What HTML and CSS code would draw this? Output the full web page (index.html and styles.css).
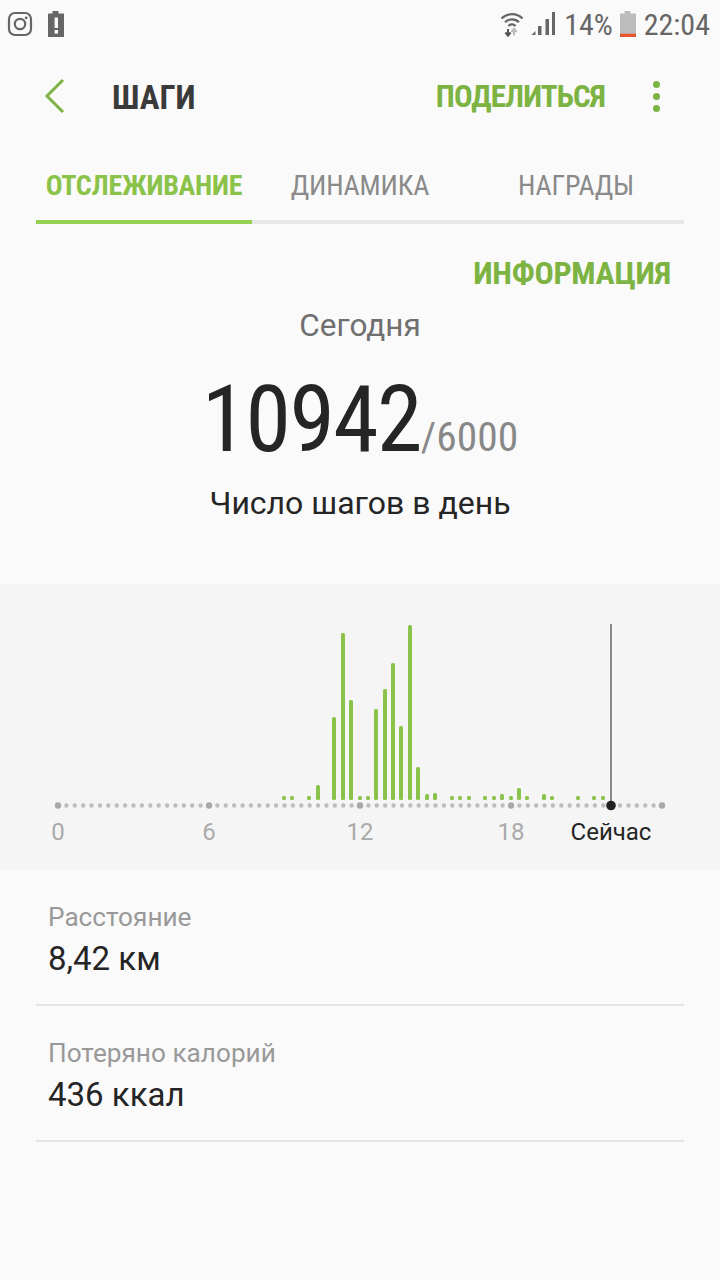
FILE: index.html
```html
<!DOCTYPE html>
<html lang="ru">
<head>
    <meta charset="UTF-8">
    <meta name="viewport" content="width=device-width, initial-scale=1.0">
    <title>Шаги</title>
    <link rel="stylesheet" href="styles.css">
</head>
<body>

<div class="statusbar">
    <div class="status-left">
        <svg class="ic-insta" width="26" height="26" viewBox="0 0 26 26">
            <rect x="2" y="2" width="22" height="22" rx="6" fill="none" stroke="#666" stroke-width="2.2"/>
            <circle cx="13" cy="13" r="5.2" fill="none" stroke="#666" stroke-width="2.2"/>
            <circle cx="19.2" cy="6.8" r="1.4" fill="#666"/>
        </svg>
        <svg class="ic-alert" width="18" height="26" viewBox="0 0 18 26">
            <path d="M5.5 0h6v2.5h5.5v23.5h-16v-23.5h4.5z" fill="#666"/>
            <rect x="7.6" y="6.5" width="3.4" height="10.5" fill="#fafafa"/>
            <rect x="7.6" y="19" width="3.4" height="3.6" fill="#fafafa"/>
        </svg>
    </div>
    <div class="status-right">
        <svg class="ic-wifi" width="24" height="26" viewBox="0 0 24 26">
            <path d="M1.5 7.5a15 15 0 0 1 21 0M5 11.3a10 10 0 0 1 14 0M8.4 15a5 5 0 0 1 7.2 0" fill="none" stroke="#666" stroke-width="2.2"/>
            <path d="M8 24.5v-6.5M5.4 21.5l2.6 3.2 2.6-3.2" fill="none" stroke="#555" stroke-width="2"/>
            <path d="M14 24.5v-6.5M11.4 21l2.6-3.2 2.6 3.2" fill="none" stroke="#bbb" stroke-width="2"/>
        </svg>
        <svg class="ic-signal" width="26" height="26" viewBox="0 0 26 26">
            <path d="M1.5 24l4-4v4zM8 24v-9h3.5v9zM15.5 24v-16h3.5v16zM22 24v-23h3v23z" fill="#666"/>
        </svg>
        <span class="status-text pct">14%</span>
        <svg class="ic-batt" width="18" height="26" viewBox="0 0 18 26">
            <path d="M5.5 0h6v2.5h5.5v23.5h-16v-23.5h4.5z" fill="#bdbdbd"/>
            <rect x="1" y="22.7" width="16" height="3.3" fill="#e8562e"/>
        </svg>
        <span class="status-text time">22:04</span>
    </div>
</div>

<header class="appbar">
    <svg class="back" width="22" height="36" viewBox="0 0 22 36">
        <path d="M19 2L3 18l16 16" fill="none" stroke="#7cb342" stroke-width="3"/>
    </svg>
    <span class="title"><span class="narrow">ШАГИ</span></span>
    <span class="share"><span class="narrow">ПОДЕЛИТЬСЯ</span></span>
    <div class="more"><i></i><i></i><i></i></div>
</header>

<nav class="tabs">
    <div class="tab active"><span class="narrow">ОТСЛЕЖИВАНИЕ</span></div>
    <div class="tab"><span class="narrow">ДИНАМИКА</span></div>
    <div class="tab"><span class="narrow">НАГРАДЫ</span></div>
</nav>

<div class="info"><span class="narrow">ИНФОРМАЦИЯ</span></div>

<section class="today">
    <div class="today-label">Сегодня</div>
    <div class="count">
        <span class="narrow"><span class="count-value">10942</span><span class="count-goal">/6000</span></span>
    </div>
    <div class="count-label">Число шагов в день</div>
</section>

<section class="chart">
    <svg width="720" height="286" viewBox="0 584 720 286">
        <line class="axis-dots" x1="58" y1="805.5" x2="662" y2="805.5"/>
        <circle class="axis-tick" cx="58" cy="805.5" r="3.2"/>
        <circle class="axis-tick" cx="209" cy="805.5" r="3.2"/>
        <circle class="axis-tick" cx="360" cy="805.5" r="3.2"/>
        <circle class="axis-tick" cx="511" cy="805.5" r="3.2"/>
        <circle class="axis-tick" cx="662" cy="805.5" r="3.2"/>

        <g class="bars">
            <rect x="282" y="796" width="4" height="4"/>
            <rect x="290" y="796" width="4" height="4"/>
            <rect x="307" y="796" width="4" height="4"/>
            <rect x="316" y="785" width="4" height="15"/>
            <rect x="332" y="717" width="4" height="83"/>
            <rect x="341" y="633" width="4" height="167"/>
            <rect x="349" y="700" width="4" height="100"/>
            <rect x="358" y="796" width="4" height="4"/>
            <rect x="366" y="796" width="4" height="4"/>
            <rect x="374" y="709" width="4" height="91"/>
            <rect x="383" y="689" width="4" height="111"/>
            <rect x="391" y="663" width="4" height="137"/>
            <rect x="399" y="726" width="4" height="74"/>
            <rect x="408" y="625" width="4" height="175"/>
            <rect x="416" y="767" width="4" height="33"/>
            <rect x="425" y="794" width="4" height="6"/>
            <rect x="433" y="793" width="4" height="7"/>
            <rect x="450" y="796" width="4" height="4"/>
            <rect x="458" y="796" width="4" height="4"/>
            <rect x="467" y="796" width="4" height="4"/>
            <rect x="483" y="796" width="4" height="4"/>
            <rect x="492" y="796" width="4" height="4"/>
            <rect x="500" y="794" width="4" height="6"/>
            <rect x="509" y="796" width="4" height="4"/>
            <rect x="517" y="788" width="4" height="12"/>
            <rect x="525" y="796" width="4" height="4"/>
            <rect x="542" y="794" width="4" height="6"/>
            <rect x="550" y="796" width="4" height="4"/>
            <rect x="576" y="796" width="4" height="4"/>
            <rect x="592" y="796" width="4" height="4"/>
            <rect x="601" y="796" width="4" height="4"/>
        </g>

        <line class="now-line" x1="611" y1="624" x2="611" y2="805"/>
        <circle class="now-dot" cx="611" cy="805.5" r="4.8"/>

        <text class="axis-label" x="58" y="840">0</text>
        <text class="axis-label" x="209" y="840">6</text>
        <text class="axis-label" x="360" y="840">12</text>
        <text class="axis-label" x="511" y="840">18</text>
        <text class="axis-label now" x="611" y="840">Сейчас</text>
    </svg>
</section>

<section class="stats">
    <div class="stat">
        <div class="stat-label">Расстояние</div>
        <div class="stat-value">8,42 км</div>
    </div>
    <div class="stat">
        <div class="stat-label">Потеряно калорий</div>
        <div class="stat-value">436 ккал</div>
    </div>
</section>

</body>
</html>
```

FILE: styles.css
```css
body {
    font-family: Roboto, "Noto Sans", sans-serif;
    background-color: #fafafa;
    margin: 0;
    padding: 0;
    color: #252525;
    width: 720px;
    height: 1280px;
    overflow: hidden;
}
svg {
    display: block;
}

/* condensed caps, the phone font is Roboto Condensed */
.narrow {
    display: inline-block;
    font-stretch: 75%;
    white-space: nowrap;
}

.statusbar {
    height: 48px;
    display: flex;
    justify-content: space-between;
    align-items: center;
    padding: 0 10px 0 7px;
}
.status-left, .status-right {
    display: flex;
    align-items: center;
}
.status-left {
    gap: 14px;
}
.status-text {
    font-size: 30px;
    color: #666;
    font-stretch: 75%;
}
.ic-signal {
    margin-left: 6px;
}
.pct {
    margin-left: 8px;
}
.ic-batt {
    margin-left: 6px;
}
.time {
    margin-left: 7px;
}

.appbar {
    height: 96px;
    display: flex;
    align-items: center;
    padding: 0 60px 0 44px;
}
.title {
    margin: 2px 0 0 46px;
    font-size: 33px;
    font-weight: 700;
    color: #3a3a3a;
}
.share {
    margin-left: auto;
    font-size: 31px;
    font-weight: 700;
    letter-spacing: -0.9px;
    color: #7cb342;
}
.more {
    margin-left: 48px;
    display: flex;
    flex-direction: column;
    gap: 5px;
}
.more i {
    display: block;
    width: 7px;
    height: 7px;
    border-radius: 50%;
    background-color: #7cb342;
}

.tabs {
    display: flex;
    margin: 0 36px;
    border-bottom: 4px solid #e8e8e8;
}
.tab {
    flex: 1;
    height: 70px;
    padding-top: 6px;
    display: flex;
    align-items: center;
    justify-content: center;
    font-size: 28px;
    letter-spacing: -0.15px;
    color: #8a8a8a;
    margin-bottom: -4px;
    box-sizing: content-box;
}
.tab.active {
    color: #8bc34a;
    font-weight: 700;
    letter-spacing: -0.25px;
    border-bottom: 4px solid #94d153;
}

.info {
    text-align: right;
    padding: 30px 49px 0 0;
    font-size: 32px;
    font-weight: 700;
    letter-spacing: -0.3px;
    color: #7cb342;
}

.today {
    text-align: center;
    margin-top: 15px;
}
.today-label {
    font-size: 31.5px;
    color: #6f6f6f;
}
.count {
    font-size: 92px;
    line-height: 78px;
    margin-top: 37px;
}
.count-value {
    color: #252525;
    letter-spacing: -1.6px;
}
.count-goal {
    font-size: 41.5px;
    color: #888;
}
.count-label {
    font-size: 32px;
    color: #252525;
    margin-top: 8px;
}

.chart {
    margin-top: 62px;
    height: 286px;
    background-color: #f5f5f5;
}
.axis-dots {
    stroke: #bdbdbd;
    stroke-width: 4.4;
    stroke-linecap: round;
    stroke-dasharray: 0 8.389;
}
.axis-tick {
    fill: #a8a8a8;
}
.bars rect {
    fill: #8bc34a;
    rx: 1.5px;
}
.now-line {
    stroke: #8a8a8a;
    stroke-width: 2;
}
.now-dot {
    fill: #212121;
}
.axis-label {
    font-size: 24px;
    fill: #aaa;
    text-anchor: middle;
}
.axis-label.now {
    fill: #252525;
}

.stats {
    margin: 0 36px;
}
.stat {
    height: 136px;
    box-sizing: border-box;
    padding: 32px 12px 0;
    border-bottom: 2px solid #e4e4e4;
}
.stat-label {
    font-size: 26.2px;
    color: #999;
}
.stat-value {
    font-size: 33px;
    color: #252525;
    margin-top: 7px;
}
```
